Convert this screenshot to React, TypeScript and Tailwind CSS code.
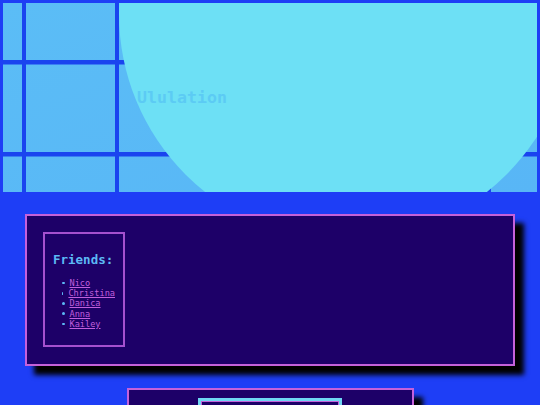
import React from "react";

const mono = { fontFamily: '"DejaVu Sans Mono", "Liberation Mono", monospace' };

function GridBg() {
  const xs = [22, 115, 208, 301, 394, 487];
  const ys = [60, 152];
  return (
    <svg className="absolute inset-0" width="534" height="189" viewBox="0 0 534 189">
      <defs>
        <linearGradient id="g" x1="0" y1="0" x2="1" y2="1">
          <stop offset="0" stopColor="#5bbdf6" />
          <stop offset="1" stopColor="#58b6f6" />
        </linearGradient>
      </defs>
      <rect width="534" height="189" fill="url(#g)" />
      {xs.map((x) => (
        <rect key={"x" + x} x={x - 3} y={0} width={4} height={189} fill="#1a44ef" />
      ))}
      {ys.map((y) => (
        <rect key={"y" + y} x={0} y={y - 3} width={534} height={4.5} fill="#1a44ef" />
      ))}
    </svg>
  );
}

export default function App() {
  return (
    <div className="w-[540px] h-[405px] overflow-hidden bg-[#1e3ef6]" style={mono}>
      <div className="p-[3px]">
        <div className="relative h-[189px] overflow-hidden flex items-center pl-[134px]">
          <GridBg />
          <div className="absolute left-[116px] top-[-216px] w-[454px] h-[454px] rounded-full bg-[#6de0f5]" />
          <h1 className="relative text-[16.6px] leading-[20px] font-bold text-[#5ccbf4] mt-[1px]">Ululation</h1>
        </div>
      </div>
      <div className="mt-[19px] mx-[25px] h-[152px] border-2 border-[#c561da] bg-[#1d0068] shadow-[9px_9px_5px_#000] p-[16px]">
        <div className="w-[82px] h-[115px] border-2 border-[#a550cf] px-[8px] pt-[18px]">
          <h2 className="text-[12.5px] leading-[16px] font-bold text-[#5cb9f5]">Friends:</h2>
          <ul className="mt-[10px] pl-[9px] text-[8.6px] leading-[10.2px]">
            {["Nico", "Christina", "Danica", "Anna", "Kailey"].map((n) => (
              <li key={n} className="flex items-center">
                <span className="w-[2.5px] h-[2.5px] rounded-full bg-[#5cb9f5] mr-[5px]" />
                <a href="#" className="underline text-[#c15fdd]">{n}</a>
              </li>
            ))}
          </ul>
        </div>
      </div>
      <div className="mt-[22px] mx-auto w-[287px] h-[60px] border-2 border-[#c561da] bg-[#1d0068] shadow-[9px_9px_5px_#000] pt-[8px]">
        <div className="mx-auto w-[144px] h-[40px] border-[3px] border-[#6fd6f3]">
          <div className="h-full border border-[#c561da]" />
        </div>
      </div>
    </div>
  );
}
